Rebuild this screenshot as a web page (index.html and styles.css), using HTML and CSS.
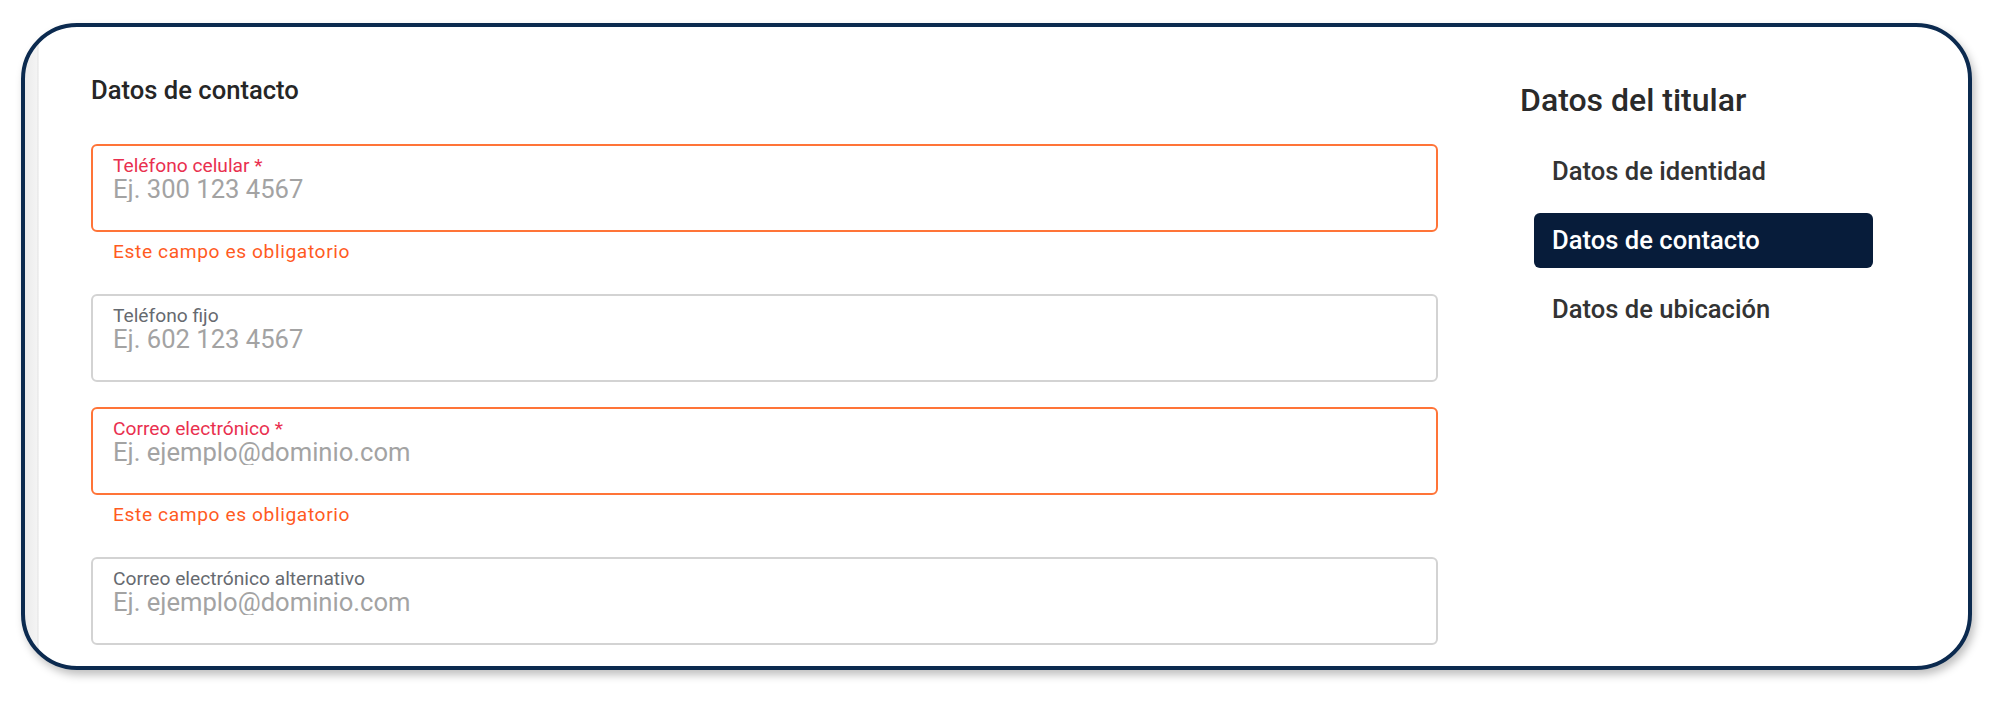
FILE: index.html
```html
<!DOCTYPE html>
<html lang="es">
<head>
<meta charset="utf-8">
<title>Datos de contacto</title>
<link rel="stylesheet" href="styles.css">
</head>
<body>
<div class="card">
  <section class="main">
    <h2 class="section-title">Datos de contacto</h2>

    <div class="field field--error">
      <label class="field-label" for="cel">Teléfono celular *</label>
      <input class="field-input" id="cel" type="text" placeholder="Ej. 300 123 4567">
    </div>
    <div class="field-error">Este campo es obligatorio</div>

    <div class="field">
      <label class="field-label" for="fijo">Teléfono fijo</label>
      <input class="field-input" id="fijo" type="text" placeholder="Ej. 602 123 4567">
    </div>

    <div class="field field--error">
      <label class="field-label" for="mail">Correo electrónico *</label>
      <input class="field-input" id="mail" type="text" placeholder="Ej. ejemplo@dominio.com">
    </div>
    <div class="field-error">Este campo es obligatorio</div>

    <div class="field">
      <label class="field-label" for="mail2">Correo electrónico alternativo</label>
      <input class="field-input" id="mail2" type="text" placeholder="Ej. ejemplo@dominio.com">
    </div>
  </section>

  <aside class="side">
    <h3 class="side-title">Datos del titular</h3>
    <nav class="side-nav">
      <a class="side-item">Datos de identidad</a>
      <a class="side-item side-item--active">Datos de contacto</a>
      <a class="side-item">Datos de ubicación</a>
    </nav>
  </aside>
</div>
</body>
</html>
```

FILE: styles.css
```css
* { box-sizing: border-box; }

html, body {
  margin: 0;
  padding: 0;
  background: #ffffff;
  font-family: Roboto, "Noto Sans", Arial, sans-serif;
}

body {
  width: 2002px;
  height: 704px;
  overflow: hidden;
  padding: 23px 0 0 21px;
}

.card {
  width: 1951px;
  height: 647px;
  border: 4px solid #0b2a4f;
  border-radius: 56px;
  box-shadow: 3px 5px 8px rgba(0, 0, 0, 0.25);
  overflow: hidden;
  display: flex;
  align-items: flex-start;
  background:
    linear-gradient(to right, #ebebeb 0, #f4f4f4 12px, #e2e2e2 13px, #ffffff 14px) left top / 14px 100% no-repeat,
    #ffffff;
}

.main {
  flex: none;
  width: 1347px;
  margin-left: 66px;
  padding-top: 48px;
}

.section-title {
  margin: 0 0 39px 0;
  font-size: 25.6px;
  line-height: 30px;
  font-weight: 500;
  color: #262626;
}

.field {
  display: flex;
  flex-direction: column;
  height: 88px;
  border: 2px solid #d3d3d3;
  border-radius: 6px;
  padding: 10px 20px 0 20px;
  margin-bottom: 25px;
}

.field--error {
  border-color: #ff7438;
  margin-bottom: 0;
}

.field-label {
  font-size: 19.2px;
  line-height: 20px;
  color: #666a70;
}

.field--error .field-label {
  color: #e9304f;
}

.field-input {
  display: block;
  width: 100%;
  height: 26px;
  margin: 0;
  padding: 0;
  border: 0;
  outline: none;
  background: transparent;
  font-family: inherit;
  font-size: 25.6px;
  line-height: 26px;
  color: #333;
}

.field-input::placeholder {
  color: #a3a3a3;
  opacity: 1;
}

.field-error {
  padding: 8px 0 0 22px;
  margin-bottom: 30px;
  font-size: 19.2px;
  line-height: 24px;
  letter-spacing: 0.6px;
  color: #ff5b1f;
}

.side {
  flex: none;
  width: 380px;
  margin-left: 82px;
  padding-top: 54px;
}

.side-title {
  margin: 0 0 25px 0;
  font-size: 32px;
  line-height: 38px;
  font-weight: 500;
  color: #2a2a2a;
}

.side-nav {
  display: flex;
  flex-direction: column;
  gap: 14px;
  margin-left: 14px;
}

.side-item {
  display: block;
  width: 339px;
  height: 55px;
  padding-left: 18px;
  border-radius: 6px;
  font-size: 25.6px;
  line-height: 55px;
  font-weight: 500;
  color: #333333;
  text-decoration: none;
}

.side-item--active {
  background: #071c3a;
  color: #ffffff;
}
```
